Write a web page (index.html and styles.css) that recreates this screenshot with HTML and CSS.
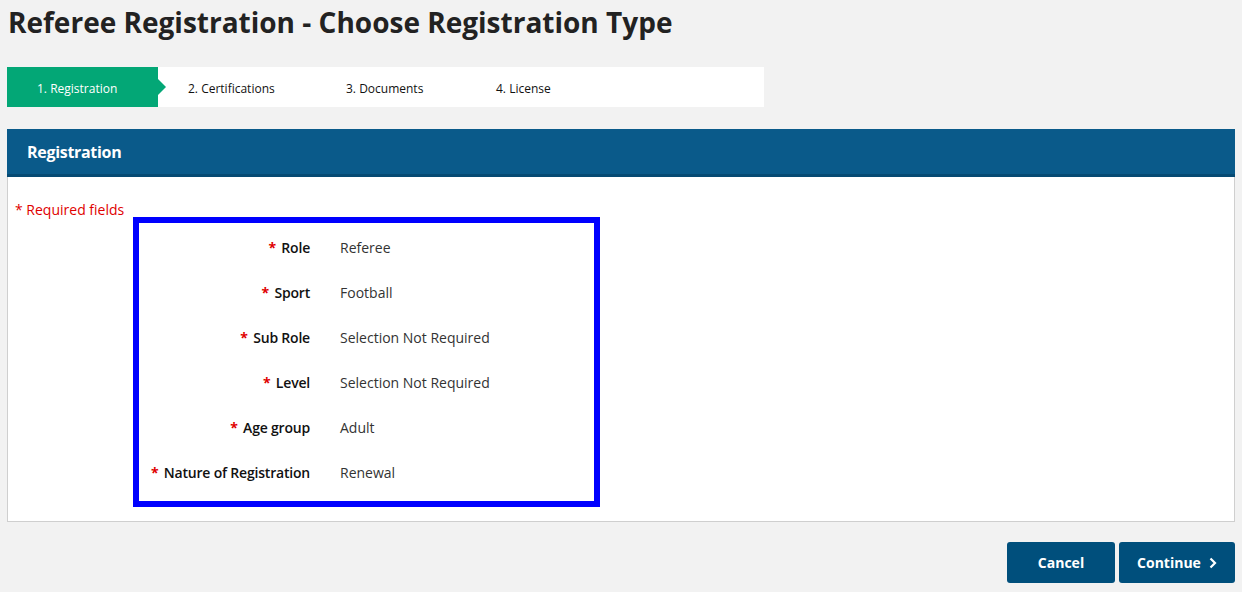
FILE: index.html
```html
<!DOCTYPE html>
<html>
<head>
<meta charset="utf-8">
<link rel="stylesheet" href="styles.css">
</head>
<body>
<h1 class="title">Referee Registration - Choose Registration Type</h1>
<div class="stepper">
  <div class="step active">1. Registration</div>
  <div class="step">2. Certifications</div>
  <div class="step">3. Documents</div>
  <div class="step">4. License</div>
</div>
<div class="panel">
  <div class="panel-head">Registration</div>
  <div class="panel-body">
    <div class="req"><span class="star">*</span> Required fields</div>
    <div class="box">
      <div class="row"><div class="label"><span class="star">*</span> Role</div><div class="value">Referee</div></div>
      <div class="row"><div class="label"><span class="star">*</span> Sport</div><div class="value">Football</div></div>
      <div class="row"><div class="label"><span class="star">*</span> Sub Role</div><div class="value">Selection Not Required</div></div>
      <div class="row"><div class="label"><span class="star">*</span> Level</div><div class="value">Selection Not Required</div></div>
      <div class="row"><div class="label"><span class="star">*</span> Age group</div><div class="value">Adult</div></div>
      <div class="row"><div class="label"><span class="star">*</span> Nature of Registration</div><div class="value">Renewal</div></div>
    </div>
  </div>
</div>
<div class="actions">
  <button class="btn">Cancel</button>
  <button class="btn">Continue <svg class="chev" width="8" height="12" viewBox="0 0 8 12"><path d="M1.5 1.5 L6 6 L1.5 10.5" fill="none" stroke="#fff" stroke-width="2.2"/></svg></button>
</div>
</body>
</html>
```
FILE: styles.css
```css
html, body { margin: 0; padding: 0; }
body {
  background: #f2f2f2;
  font-family: "Open Sans", "Noto Sans", sans-serif;
  color: #222;
  padding: 0 7px;
  width: 1228px;
}
.title {
  margin: 0;
  padding: 2px 0 0 1px;
  height: 65px;
  box-sizing: border-box;
  font-size: 28px;
  font-weight: 700;
  letter-spacing: 0;
  color: #222;
  line-height: 40px;
}
.stepper {
  display: flex;
  width: 757px;
  height: 40px;
  background: #fff;
  font-size: 12px;
  margin-top: 2px;
  line-height: 18px;
}
.step {
  display: flex;
  align-items: center;
  padding-top: 4px;
  color: #111;
  width: 158px;
  padding-left: 30px;
  box-sizing: border-box;
}
.step:nth-child(3) { width: 150px; }
.step.active {
  position: relative;
  background: #03a776;
  color: #fff;
  width: 151px;
  padding-left: 30px;
}
.step.active::after {
  content: "";
  position: absolute;
  right: -8px;
  top: 12px;
  border-left: 8px solid #03a776;
  border-top: 8px solid transparent;
  border-bottom: 8px solid transparent;
}
.panel {
  margin-top: 22px;
  background: #fff;
  border: 1px solid #cfcfcf;
  border-top: none;
}
.panel-head {
  background: #0a5a8a;
  border-bottom: 3px solid #064a73;
  height: 45px;
  line-height: 46px;
  color: #fff;
  font-weight: 700;
  font-size: 16px;
  padding-left: 20px;
  letter-spacing: -0.3px;
  margin: 0 -1px;
}
.panel-body {
  padding: 24px 7px 14px;
}
.req {
  color: #e00000;
  font-size: 14px;
  line-height: 18px;
}
.star { color: #e00000; font-weight: 700; }
.req .star { font-weight: 400; }
.box {
  margin-left: 118px;
  margin-top: -2px;
  width: 455px;
  border: 6px solid #0000ff;
  padding: 2px 0 6px;
}
.row {
  display: flex;
  align-items: center;
  height: 45px;
  font-size: 14px;
}
.label {
  width: 171px;
  text-align: right;
  font-weight: 600;
  color: #111;
  letter-spacing: -0.2px;
}
.label .star { margin-right: 2px; }
.value {
  margin-left: 30px;
  color: #333;
}
.actions {
  display: flex;
  justify-content: flex-end;
  gap: 4px;
  margin-top: 20px;
}
.btn {
  background: #004f7c;
  color: #fff;
  border: none;
  border-radius: 3px;
  height: 41px;
  font-family: "Open Sans", "Noto Sans", sans-serif;
  font-weight: 700;
  font-size: 14px;
  padding: 0;
  width: 108px;
  display: flex;
  align-items: center;
  justify-content: center;
  gap: 8px;
}
.btn:last-child { width: 116px; }
.chev { display: block; }
```
